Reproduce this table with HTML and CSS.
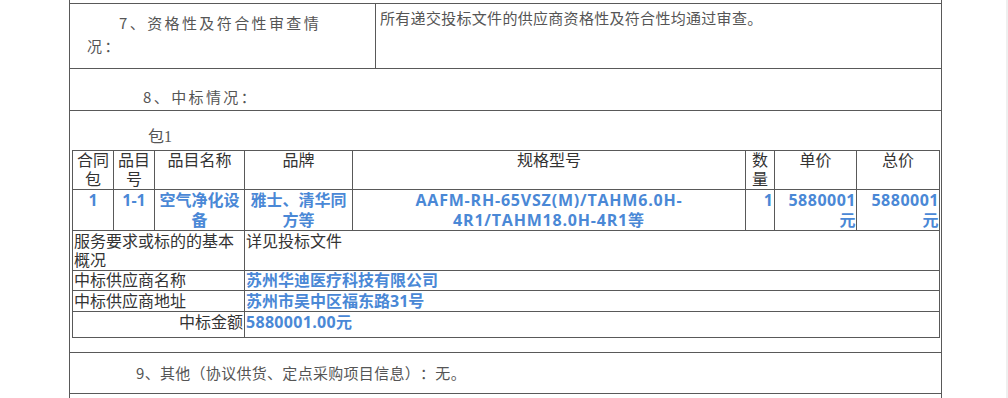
FILE: index.html
```html
<!DOCTYPE html>
<html lang="zh">
<head>
<meta charset="utf-8">
<link rel="stylesheet" href="styles.css">
</head>
<body>
<div class="doc">
  <div class="row top"></div>
  <div class="row review">
    <div class="review-label">7、资格性及符合性审查情况：</div>
    <div class="review-value">所有递交投标文件的供应商资格性及符合性均通过审查。</div>
  </div>
  <div class="row heading-row">
    <p class="heading">8、中标情况：</p>
  </div>
  <div class="row award">
    <p class="pkg">包1</p>
    <table class="award-table">
      <colgroup>
        <col class="c1"><col class="c2"><col class="c3"><col class="c4"><col class="c5"><col class="c6"><col class="c7"><col class="c8">
      </colgroup>
      <tr class="r-head">
        <th>合同包</th>
        <th>品目号</th>
        <th>品目名称</th>
        <th>品牌</th>
        <th>规格型号</th>
        <th>数量</th>
        <th>单价</th>
        <th>总价</th>
      </tr>
      <tr class="r-data">
        <td class="center">1</td>
        <td class="center">1-1</td>
        <td class="center">空气净化设备</td>
        <td class="center">雅士、清华同方等</td>
        <td class="center spec">AAFM-RH-65VSZ(M)/TAHM6.0H-<br>4R1/TAHM18.0H-4R1等</td>
        <td class="right">1</td>
        <td class="right price">5880001<br>元</td>
        <td class="right price">5880001<br>元</td>
      </tr>
      <tr class="r-service">
        <td colspan="3" class="label">服务要求或标的的基本概况</td>
        <td colspan="5" class="plain">详见投标文件</td>
      </tr>
      <tr class="r-name">
        <td colspan="3" class="label">中标供应商名称</td>
        <td colspan="5" class="value">苏州华迪医疗科技有限公司</td>
      </tr>
      <tr class="r-addr">
        <td colspan="3" class="label">中标供应商地址</td>
        <td colspan="5" class="value">苏州市吴中区福东路31号</td>
      </tr>
      <tr class="r-amount">
        <td colspan="3" class="label label-right">中标金额</td>
        <td colspan="5" class="value amount">5880001.00元</td>
      </tr>
    </table>
  </div>
  <div class="row other">
    <p class="other-text">9、其他（协议供货、定点采购项目信息）：无。</p>
  </div>
  <div class="row tail"></div>
</div>
</body>
</html>
```

FILE: styles.css
```css
* { box-sizing: border-box; }

html, body {
  margin: 0;
  padding: 0;
  background: #fff;
}

body {
  width: 1008px;
  min-height: 398px;
  border-right: 2px solid #efefef;
  overflow: hidden;
  font-family: "Noto Sans CJK SC", "Liberation Sans", sans-serif;
  text-spacing-trim: space-all;
}

.doc {
  margin-left: 69px;
  width: 873px;
  border-left: 1px solid #595959;
  border-right: 1px solid #595959;
  color: #555;
}

.row {
  border-bottom: 1px solid #595959;
}

.top { height: 4px; }

.review {
  height: 65px;
  display: flex;
}

.review-label {
  flex: 0 0 306px;
  width: 306px;
  border-right: 1px solid #595959;
  padding: 7px 40px 0 17px;
  text-indent: 32px;
  font-size: 15px;
  line-height: 23px;
  letter-spacing: 2.4px;
}

.review-value {
  flex: 1;
  padding: 2px 0 0 4px;
  font-size: 15px;
  line-height: 23px;
  letter-spacing: 0.3px;
}

.heading-row { height: 42px; }

.heading {
  margin: 0;
  padding: 16px 0 0 73px;
  font-size: 15px;
  line-height: 23px;
  letter-spacing: 2.4px;
}

.award {
  height: 242px;
  padding: 16px 1px 0 2px;
}

.pkg {
  margin: 0 0 3px 76px;
  font-family: "Liberation Serif", "Noto Sans CJK SC", serif;
  font-size: 16px;
  line-height: 20px;
  height: 20px;
}

.award-table {
  border-collapse: collapse;
  table-layout: fixed;
  width: 868px;
  color: #333;
  font-family: "Open Sans", "Noto Sans CJK SC", sans-serif;
  font-size: 16px;
  line-height: 19px;
}

.award-table th,
.award-table td {
  border: 1px solid #595959;
  padding: 0 1px;
  vertical-align: top;
  word-break: break-all;
}

.award-table th {
  font-weight: normal;
  text-align: center;
}

.c1 { width: 41px; }
.c2 { width: 41px; }
.c3 { width: 90px; }
.c4 { width: 108px; }
.c5 { width: 393px; }
.c6 { width: 29px; }
.c7 { width: 82px; }
.c8 { width: 83px; }

.r-data td {
  color: #4a88d6;
  font-weight: bold;
  line-height: 19.5px;
  padding-top: 1px;
}

.r-data td.spec { letter-spacing: 0.8px; }
.r-data td.price { letter-spacing: 0.5px; padding-right: 0; }

.r-service td { padding-top: 1px; }
.r-name td { padding-top: 0; }
.r-addr td { padding-top: 1px; }
.r-amount { height: 26px; }
.r-amount td { padding-top: 1px; }

.center { text-align: center; }
.right { text-align: right; }

.label { text-align: left; }
.label-right { text-align: right; }

.plain { padding-left: 2px; }

.value {
  color: #4a88d6;
  font-weight: bold;
}

.amount { letter-spacing: 0.3px; }

.other { height: 41px; }

.other-text {
  margin: 0;
  padding: 9px 0 0 66px;
  font-size: 15px;
  line-height: 22px;
  letter-spacing: 0.3px;
}

.tail { height: 10px; border-bottom: none; }
```
